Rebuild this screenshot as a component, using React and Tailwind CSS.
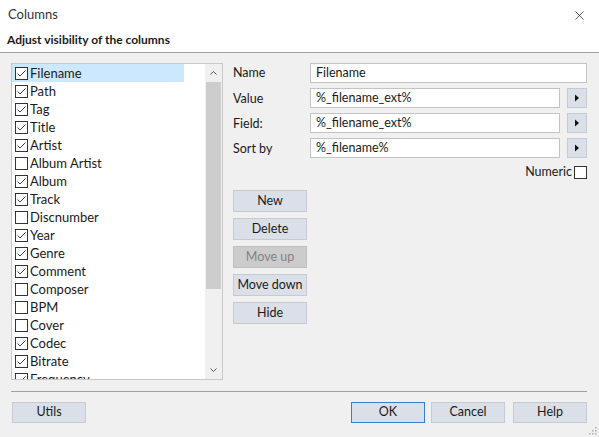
import { X } from 'lucide-react';

const columns = [
    ['Filename', true],
    ['Path', true],
    ['Tag', true],
    ['Title', true],
    ['Artist', true],
    ['Album Artist', false],
    ['Album', true],
    ['Track', true],
    ['Discnumber', false],
    ['Year', true],
    ['Genre', true],
    ['Comment', true],
    ['Composer', false],
    ['BPM', false],
    ['Cover', false],
    ['Codec', true],
    ['Bitrate', true],
    ['Frequency', true],
];

function CheckBox({ checked }) {
    return (
        <span className="flex h-[13px] w-[13px] shrink-0 items-center justify-center border border-[#333333] bg-white">
            {checked && (
                <svg width="11" height="11" viewBox="0 0 11 11">
                    <path d="M1.5 5.5 L4 8 L9.5 2.5" fill="none" stroke="#444" strokeWidth="1" />
                </svg>
            )}
        </span>
    );
}

function Btn({ children, disabled, primary, className = '' }) {
    return (
        <div
            className={[
                'flex w-[74px] items-center justify-center border text-[12.5px]',
                disabled
                    ? 'border-[#bfbfbf] bg-[#cccccc] text-[#838383]'
                    : 'bg-[#dbe0e8] text-[#1a1a1a]',
                primary ? 'border-[#3a7bd5]' : disabled ? '' : 'border-[#c6cbd3]',
                className,
            ].join(' ')}
        >
            {children}
        </div>
    );
}

function Field({ value, width }) {
    return (
        <div className={`flex h-[20px] items-center border border-[#c4c4c4] bg-white pl-[5px] text-[12.5px] text-[#1a1a1a] ${width}`}>
            {value}
        </div>
    );
}

function ArrowBtn() {
    return (
        <div className="flex h-[20px] w-[20px] items-center justify-center border border-[#c6cbd3] bg-[#dbe0e8]">
            <svg width="6" height="8" viewBox="0 0 6 8">
                <path d="M1 0.5 L5 4 L1 7.5 Z" fill="#111" />
            </svg>
        </div>
    );
}

export default function App() {
    const rows = [
        ['Value', '%_filename_ext%'],
        ['Field:', '%_filename_ext%'],
        ['Sort by', '%_filename%'],
    ];

    return (
        <div
            className="relative flex h-[437px] w-[599px] flex-col bg-[#f0f0f0] text-[#1a1a1a]"
            style={{ fontFamily: 'Lato, "Noto Sans", sans-serif' }}
        >
            <div className="flex h-[30px] items-center justify-between bg-white pl-[8px] pr-[12px]">
                <span className="text-[13px] text-[#333]">Columns</span>
                <X size={15} strokeWidth={1.2} className="text-[#222]" />
            </div>
            <div className="flex h-[23px] items-center border-b border-[#a0a0a0] bg-white pb-[2px] pl-[7px] text-[12px] font-bold">
                Adjust visibility of the columns
            </div>

            <div className="flex pl-[11px] pt-[10px]">
                <div className="flex h-[317px] w-[212px] overflow-hidden border border-[#c8c8c8] bg-white">
                    <div className="flex flex-1 flex-col overflow-hidden">
                        {columns.map(([name, on], i) => (
                            <div
                                key={name}
                                className={[
                                    'flex h-[18px] shrink-0 items-center gap-[2px] pl-[3px] text-[13px]',
                                    i === 0 ? 'w-[172px] bg-[#cce8ff]' : '',
                                ].join(' ')}
                            >
                                <CheckBox checked={on} />
                                <span className="pt-[2px]">{name}</span>
                            </div>
                        ))}
                    </div>
                    <div className="flex w-[17px] flex-col bg-[#f0f0f0]">
                        <div className="flex h-[18px] items-center justify-center">
                            <svg width="7" height="4" viewBox="0 0 7 4">
                                <path d="M0.5 3.5 L3.5 0.5 L6.5 3.5" fill="none" stroke="#555" strokeWidth="1" />
                            </svg>
                        </div>
                        <div className="mx-[1px] h-[207px] bg-[#cdcdcd]" />
                        <div className="flex-1" />
                        <div className="flex h-[18px] items-center justify-center">
                            <svg width="7" height="4" viewBox="0 0 7 4">
                                <path d="M0.5 0.5 L3.5 3.5 L6.5 0.5" fill="none" stroke="#555" strokeWidth="1" />
                            </svg>
                        </div>
                    </div>
                </div>

                <div className="ml-[10px] flex w-[354px] flex-col">
                    <div className="flex h-[20px] items-center">
                        <span className="w-[77px] pt-[1px] text-[12.5px]">Name</span>
                        <Field value="Filename" width="w-[277px]" />
                    </div>
                    {rows.map(([label, value]) => (
                        <div key={label} className="mt-[5px] flex h-[20px] items-center">
                            <span className="w-[77px] pt-[3px] text-[12.5px]">{label}</span>
                            <Field value={value} width="w-[250px]" />
                            <div className="ml-[7px]">
                                <ArrowBtn />
                            </div>
                        </div>
                    ))}
                    <div className="mt-[8px] flex h-[13px] items-center justify-end gap-[2px] text-[12.5px]">
                        <span>Numeric</span>
                        <CheckBox checked={false} />
                    </div>
                    <div className="mt-[11px] flex flex-col gap-[6px]">
                        <Btn className="h-[22px]">New</Btn>
                        <Btn className="h-[22px]">Delete</Btn>
                        <Btn className="h-[22px]" disabled>Move up</Btn>
                        <Btn className="h-[22px]">Move down</Btn>
                        <Btn className="h-[22px]">Hide</Btn>
                    </div>
                </div>
            </div>

            <div className="ml-[11px] mt-[11px] w-[576px] border-t border-[#a0a0a0]" />

            <div className="flex items-center pl-[12px] pr-[12px] pt-[10px]">
                <Btn className="h-[21px]">Utils</Btn>
                <div className="flex-1" />
                <Btn className="h-[21px]" primary>OK</Btn>
                <Btn className="ml-[6px] h-[21px]">Cancel</Btn>
                <Btn className="ml-[8px] h-[21px]">Help</Btn>
            </div>

            <svg className="absolute bottom-[2px] right-[2px]" width="8" height="8" viewBox="0 0 8 8">
                <g fill="#b0b0b0">
                    <rect x="6" y="0" width="1.5" height="1.5" />
                    <rect x="3" y="3" width="1.5" height="1.5" />
                    <rect x="6" y="3" width="1.5" height="1.5" />
                    <rect x="0" y="6" width="1.5" height="1.5" />
                    <rect x="3" y="6" width="1.5" height="1.5" />
                    <rect x="6" y="6" width="1.5" height="1.5" />
                </g>
            </svg>
        </div>
    );
}
